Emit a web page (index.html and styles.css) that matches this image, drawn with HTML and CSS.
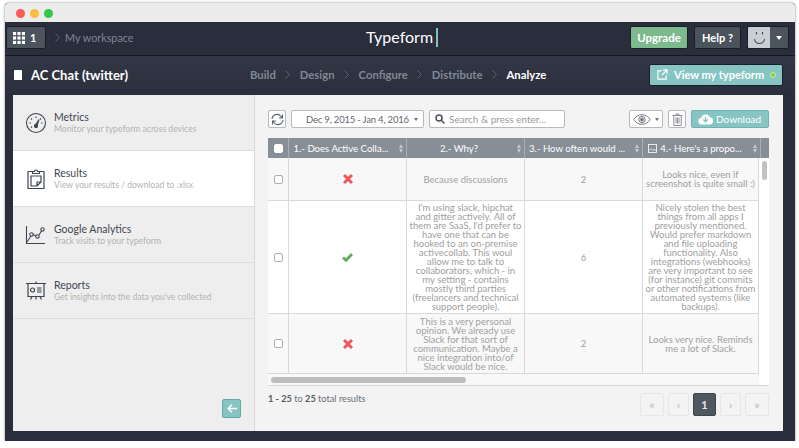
FILE: index.html
```html
<!DOCTYPE html>
<html lang="en">
<head>
    <meta charset="UTF-8">
    <title>Typeform - Results</title>
    <link rel="stylesheet" href="styles.css">
</head>
<body>
    <div class="window">
        <div class="titlebar">
            <span class="light red"></span>
            <span class="light yellow"></span>
            <span class="light green"></span>
        </div>

        <div class="topbar">
            <div class="top-left">
                <button class="btn-dark apps">
                    <svg width="12" height="12" viewBox="0 0 13 13" fill="#fff"><rect width="3.4" height="3.4"/><rect x="4.8" width="3.4" height="3.4"/><rect x="9.6" width="3.4" height="3.4"/><rect y="4.8" width="3.4" height="3.4"/><rect x="4.8" y="4.8" width="3.4" height="3.4"/><rect x="9.6" y="4.8" width="3.4" height="3.4"/><rect y="9.6" width="3.4" height="3.4"/><rect x="4.8" y="9.6" width="3.4" height="3.4"/><rect x="9.6" y="9.6" width="3.4" height="3.4"/></svg>
                    <span>1</span>
                </button>
                <svg class="crumb" width="5" height="9" viewBox="0 0 5 9" fill="none" stroke="#59626e"><path d="M.5.5l4 4-4 4"/></svg>
                <span class="workspace">My workspace</span>
            </div>
            <div class="logo">Typeform<span class="caret"></span></div>
            <div class="top-right">
                <button class="btn-upgrade">Upgrade</button>
                <button class="btn-dark help">Help ?</button>
                <div class="avatar">
                    <div class="face">
                        <svg width="13" height="14" viewBox="0 0 13 14" fill="none" stroke="#3a414c" stroke-width="1.1"><path d="M3.5 1v2.5M9.5 1v2.5"/><path d="M1.5 8.5c.7 3 2.700 4 5 4s4.300-1 5-4" stroke-linecap="round"/></svg>
                    </div>
                    <div class="face-menu"><i class="tri-white"></i></div>
                </div>
            </div>
        </div>

        <div class="subbar">
            <div class="form-name">
                <svg width="8" height="10" viewBox="0 0 8 10" fill="#fff"><path d="M.5 0h7l.5.5v9l-.5.500h-7L0 9.500v-9z"/></svg>
                <span>AC Chat (twitter)</span>
            </div>
            <nav class="steps">
                <a>Build</a><svg width="5" height="9" viewBox="0 0 5 9" fill="none" stroke="#59626e"><path d="M.5.5l4 4-4 4"/></svg>
                <a>Design</a><svg width="5" height="9" viewBox="0 0 5 9" fill="none" stroke="#59626e"><path d="M.5.5l4 4-4 4"/></svg>
                <a>Configure</a><svg width="5" height="9" viewBox="0 0 5 9" fill="none" stroke="#59626e"><path d="M.5.5l4 4-4 4"/></svg>
                <a>Distribute</a><svg width="5" height="9" viewBox="0 0 5 9" fill="none" stroke="#59626e"><path d="M.5.5l4 4-4 4"/></svg>
                <a class="current">Analyze</a>
            </nav>
            <button class="btn-view">
                <svg width="11" height="11" viewBox="0 0 12 12" fill="none" stroke="#fff" stroke-width="1.300"><path d="M5 2H1v9h9V7"/><path d="M6.500 1H11v4.500M11 1L5.500 6.500"/></svg>
                <span>View my typeform</span>
                <i class="live-dot"></i>
            </button>
        </div>

        <div class="content">
            <aside class="sidebar">
                <div class="side-item">
                    <svg width="22" height="22" viewBox="0 0 22 22" fill="none" stroke="#3f4651" stroke-width="1.100"><circle cx="11" cy="11" r="9.500"/><path d="M11 4.500v1.500M6 6.500l1 1M16 6.500l-1 1M4.500 11H6M17.500 11H16M6 15.500l1-1"/><path d="M14 7.500l-3.500 5.500 1.500.8z" fill="#3f4651"/><circle cx="11" cy="14" r="1.600" fill="#3f4651"/></svg>
                    <div><h3>Metrics</h3><p>Monitor your typeform across devices</p></div>
                </div>
                <div class="side-item active">
                    <svg width="22" height="22" viewBox="0 0 22 22" fill="none" stroke="#3f4651" stroke-width="1.200"><path d="M7.500 3.500H3v17h16v-17h-4.500"/><path d="M7.500 5.500v-2h2a1.500 1.500 0 0 1 3 0h2v2z"/><path d="M6 8h10v6l-4 4H6zM16 14h-4v4"/></svg>
                    <div><h3>Results</h3><p>View your results / download to .xlsx</p></div>
                </div>
                <div class="side-item">
                    <svg width="22" height="22" viewBox="0 0 22 22" fill="none" stroke="#3f4651" stroke-width="1.100"><path d="M1.500 2v17.500H20"/><path d="M2 18l4-6M8 10.500l3 1.500M14 11l2.500-4"/><circle cx="6.500" cy="10.500" r="1.700"/><circle cx="12.500" cy="12.500" r="1.700"/><circle cx="17.500" cy="5.500" r="1.700"/></svg>
                    <div><h3>Google Analytics</h3><p>Track visits to your typeform</p></div>
                </div>
                <div class="side-item">
                    <svg width="22" height="22" viewBox="0 0 22 22" fill="none" stroke="#3f4651" stroke-width="1.200"><path d="M1 3.500h20M11 1.500v2M3 3.500v13h16v-13M7 16.500l-1.500 3M15 16.500l1.500 3M11 16.500v3"/><circle cx="7.500" cy="10" r="2"/><path d="M12 8h4.500M12 10h4.500M12 12h4.500"/></svg>
                    <div><h3>Reports</h3><p>Get insights into the data you've collected</p></div>
                </div>
                <div class="side-foot">
                    <button class="btn-back">
                        <svg width="10" height="9" viewBox="0 0 10 9" fill="none" stroke="#fff" stroke-width="1.500"><path d="M4.800.8L1.200 4.500l3.600 3.700M1.500 4.500H10"/></svg>
                    </button>
                </div>
            </aside>

            <main class="results">
                <div class="toolbar">
                    <button class="tool square">
                        <svg width="13" height="13" viewBox="0 0 13 13" fill="none" stroke="#59626e" stroke-width="1.100"><path d="M1 6a5 5 0 0 1 9-2.500L11.500 5M11.500 1.500V5H8"/><path d="M12 7a5 5 0 0 1-9 2.500L1.500 8M1.500 11.500V8H5"/></svg>
                    </button>
                    <button class="tool date">Dec 9, 2015 - Jan 4, 2016<i class="tri-grey"></i></button>
                    <div class="tool search">
                        <svg width="10" height="10" viewBox="0 0 10 10" fill="none" stroke="#4a525c" stroke-width="1.500"><circle cx="4" cy="4" r="3"/><path d="M6.300 6.300L9.500 9.500"/></svg>
                        <span>Search &amp; press enter...</span>
                    </div>
                    <button class="tool eye">
                        <svg width="18" height="11" viewBox="0 0 18 11" fill="none" stroke="#737a83" stroke-width="1"><path d="M.8 5.500C3 2 6 .7 9 .7s6 1.300 8.200 4.800C15 9 12 10.300 9 10.300S3 9 .8 5.500z"/><circle cx="9" cy="5.500" r="3.200"/><circle cx="9" cy="5.500" r="1.500" fill="#737a83"/></svg>
                        <i class="tri-grey"></i>
                    </button>
                    <button class="tool square">
                        <svg width="11" height="13" viewBox="0 0 11 13" fill="none" stroke="#8a9097" stroke-width="1"><path d="M.5 2.500h10M4 2.500V1h3v1.500M1.800 2.500v10h7.400v-10M4 4.500v6M5.500 4.500v6M7 4.500v6"/></svg>
                    </button>
                    <button class="btn-download">
                        <svg width="15" height="12" viewBox="0 0 16 13"><path d="M4 12.500a3.500 3.500 0 0 1-.6-7 4.800 4.800 0 0 1 9.200-.8 3.900 3.900 0 0 1-.4 7.800z" fill="#fff"/><path d="M8 4v5M5.500 7L8 9.500 10.500 7" fill="none" stroke="#86c5c3" stroke-width="1.500"/></svg>
                        <span>Download</span>
                    </button>
                </div>

                <div class="grid">
                    <div class="grid-head">
                        <div class="cell-head check"><i class="box solid"></i></div>
                        <div class="cell-head"><span>1.- Does Active Colla...</span><i class="sort"></i></div>
                        <div class="cell-head"><span>2.- Why?</span><i class="sort"></i></div>
                        <div class="cell-head"><span>3.- How often would ...</span><i class="sort"></i></div>
                        <div class="cell-head"><span><svg class="img-icon" width="9" height="9" viewBox="0 0 9 9" fill="none" stroke="#fff" stroke-width=".8"><rect x=".5" y=".5" width="8" height="8"/><path d="M.5 7l2.500-2.500L5 6.500l1.500-1.500L8.500 7"/></svg>4.- Here's a propo...</span><i class="sort"></i></div>
                        <div class="cell-head"></div>
                    </div>
                    <div class="grid-main">
                        <div class="grid-rows">
                            <div class="row tint" style="height: 43px">
                                <div class="cell"><i class="box"></i></div>
                                <div class="cell"><svg width="10" height="10" viewBox="0 0 10 10" stroke="#f0575c" stroke-width="3"><path d="M1 1l8 8M9 1l-8 8"/></svg></div>
                                <div class="cell">Because discussions</div>
                                <div class="cell">2</div>
                                <div class="cell">Looks nice, even if screenshot is quite small :)</div>
                            </div>
                            <div class="row" style="height: 113px">
                                <div class="cell"><i class="box"></i></div>
                                <div class="cell"><svg width="11" height="9" viewBox="0 0 11 9" fill="none" stroke="#62a862" stroke-width="2.800"><path d="M1 4.500l3 2.800L10 1"/></svg></div>
                                <div class="cell"><p>I'm using slack, hipchat<br>and gitter actively. All of<br>them are SaaS, I'd prefer to<br>have one that can be<br>hooked to an on-premise<br>activecollab. This woul<br>allow me to talk to<br>collaborators, which - in<br>my setting - contains<br>mostly third parties<br>(freelancers and technical<br>support people).</p></div>
                                <div class="cell">6</div>
                                <div class="cell">Nicely stolen the best things from all apps I previously mentioned. Would prefer markdown and file uploading functionality. Also integrations (webhooks) are very important to see (for instance) git commits or other notifications from automated systems (like backups).</div>
                            </div>
                            <div class="row tint" style="height: 60px">
                                <div class="cell"><i class="box"></i></div>
                                <div class="cell"><svg width="10" height="10" viewBox="0 0 10 10" stroke="#f0575c" stroke-width="3"><path d="M1 1l8 8M9 1l-8 8"/></svg></div>
                                <div class="cell"><p>This is a very personal<br>opinion. We already use<br>Slack for that sort of<br>communication. Maybe a<br>nice integration into/of<br>Slack would be nice.</p></div>
                                <div class="cell">2</div>
                                <div class="cell">Looks very nice. Reminds me a lot of Slack.</div>
                            </div>
                        </div>
                        <div class="v-track"><div class="v-thumb"></div></div>
                    </div>
                    <div class="h-track"><div class="h-thumb"></div></div>
                </div>

                <div class="grid-foot">
                    <div class="total"><b>1 - 25</b> to <b>25</b> total results</div>
                    <div class="pager">
                        <button class="page wide">«</button>
                        <button class="page">‹</button>
                        <button class="page on">1</button>
                        <button class="page">›</button>
                        <button class="page wide">»</button>
                    </div>
                </div>
            </main>
        </div>
    </div>
</body>
</html>
```
FILE: styles.css
```css
* {
    box-sizing: border-box;
}
body {
    margin: 0;
    background: #fff;
    font-family: 'Lato', 'Open Sans', sans-serif;
    overflow: hidden;
}
button {
    font-family: inherit;
    padding: 0;
    cursor: pointer;
    white-space: nowrap;
}
i {
    display: block;
}
.window {
    width: 790px;
    height: 438px;
    margin: 3px 0 0 5px;
    border-radius: 4px 4px 0 0;
    box-shadow: 0 0 3px rgba(0, 0, 0, 0.45);
    background: #2a2d3c;
    display: flex;
    flex-direction: column;
    overflow: hidden;
}
.titlebar {
    height: 19px;
    background: #ececec;
    padding-left: 11px;
    padding-top: 6px;
    display: flex;
    gap: 5px;
}
.light {
    width: 9px;
    height: 9px;
    border-radius: 50%;
}
.red { background: #fc5b57; }
.yellow { background: #fdbc40; }
.green { background: #34c84a; }

.topbar {
    height: 34px;
    padding: 4px 6px 0 1px;
    display: flex;
    justify-content: space-between;
    position: relative;
    border-bottom: 1px solid #15171f;
}
.top-left, .top-right {
    display: flex;
    align-items: flex-start;
}
.btn-dark {
    height: 23px;
    background: #4b535d;
    border: 1px solid #1b1d27;
    border-radius: 2px;
    color: #fff;
    font-weight: 700;
    font-size: 11px;
}
.apps {
    width: 40px;
    display: flex;
    align-items: center;
    gap: 5px;
    padding-left: 6px;
}
.crumb {
    margin: 7px 0 0 9px;
}
.workspace {
    margin: 5px 0 0 5px;
    font-size: 10.8px;
    color: #7b8794;
}
.logo {
    position: absolute;
    left: 361px;
    top: 3px;
    font-size: 16px;
    color: #fff;
    display: flex;
    align-items: center;
    gap: 3px;
    line-height: 24px;
}
.caret {
    width: 2px;
    height: 19px;
    background: #7cc4c0;
}
.top-right {
    gap: 6px;
}
.btn-upgrade {
    width: 58px;
    height: 23px;
    background: #7cb98d;
    border: 1px solid #1b1d27;
    border-radius: 2px;
    color: #fff;
    font-weight: 700;
    font-size: 11.5px;
}
.help {
    width: 47px;
}
.avatar {
    width: 42px;
    height: 23px;
    display: flex;
    border: 1px solid #1b1d27;
    border-radius: 2px;
    overflow: hidden;
}
.face {
    width: 22px;
    background: #c9ced3;
    display: flex;
    align-items: center;
    justify-content: center;
}
.face-menu {
    flex: 1;
    background: #4b535d;
    display: flex;
    align-items: center;
    justify-content: center;
}
.tri-white {
    border-left: 3.5px solid transparent;
    border-right: 3.5px solid transparent;
    border-top: 4px solid #fff;
}
.tri-grey {
    border-left: 2.5px solid transparent;
    border-right: 2.5px solid transparent;
    border-top: 3.5px solid #6b727b;
}

.subbar {
    height: 39px;
    padding: 0 12px 2px 9px;
    background: linear-gradient(#333745, #2b2e3d);
    display: flex;
    align-items: center;
    position: relative;
}
.form-name {
    display: flex;
    align-items: center;
    gap: 9px;
    color: #fff;
    font-size: 13px;
    font-weight: 700;
}
.steps {
    position: absolute;
    left: 245px;
    top: 12px;
    display: flex;
    align-items: center;
    font-size: 11.3px;
    font-weight: 700;
    color: #7f8894;
}
.steps svg {
    margin: 0 9.5px;
}
.current {
    color: #fff;
}
.btn-view {
    margin-left: auto;
    width: 134px;
    height: 22px;
    background: #86c5c3;
    border: 1px solid #1b1d27;
    border-radius: 2px;
    color: #fff;
    font-size: 11px;
    font-weight: 700;
    display: flex;
    align-items: center;
    padding-left: 7px;
}
.btn-view span {
    margin-left: 6px;
}
.live-dot {
    width: 6px;
    height: 6px;
    margin-left: 6px;
    border-radius: 50%;
    background: #7fd13b;
    border: 1px solid #cfeaa8;
}

.content {
    flex: 1;
    display: flex;
    margin: 0 12px 10px 8px;
    min-height: 0;
}
.sidebar {
    width: 242px;
    background: #eeeeee;
    border-right: 1px solid #d8d8d8;
    display: flex;
    flex-direction: column;
}
.side-item {
    height: 56px;
    border-bottom: 1px solid #dedede;
    display: flex;
    align-items: center;
    gap: 7px;
    padding: 1px 0 0 12px;
}
.side-item svg {
    margin-top: -1px;
}
.side-item.active {
    background: #fff;
}
.side-item h3 {
    margin: 0 0 1px;
    font-size: 10.5px;
    line-height: 12px;
    font-weight: 400;
    color: #3f4651;
}
.side-item p {
    margin: 0;
    font-size: 8.6px;
    line-height: 11px;
    color: #b3b3b3;
}
.side-foot {
    flex: 1;
    display: flex;
    align-items: flex-end;
    justify-content: flex-end;
    padding: 0 13px 13px 0;
}
.btn-back {
    width: 19px;
    height: 19px;
    background: #86c5c3;
    border: 1px solid #62a9a7;
    border-radius: 2px;
    display: flex;
    align-items: center;
    justify-content: center;
}

.results {
    flex: 1;
    background: #f3f3f3;
    padding: 15px 14px 0 13px;
    min-width: 0;
}
.toolbar {
    height: 18px;
    display: flex;
    gap: 5px;
}
.tool {
    height: 18px;
    background: #fff;
    border: 1px solid #b9b9b9;
    border-radius: 2px;
    display: flex;
    align-items: center;
    color: #5f666f;
    font-size: 10px;
}
.square {
    width: 18px;
    justify-content: center;
}
.date {
    width: 133px;
    padding-left: 14px;
    gap: 5px;
    font-size: 9.5px;
    letter-spacing: -0.2px;
}
.search {
    width: 136px;
    padding-left: 5px;
    gap: 4px;
    color: #9a9a9a;
}
.eye {
    width: 34px;
    margin-left: auto;
    justify-content: center;
    gap: 4px;
}
.btn-download {
    width: 78px;
    height: 18px;
    background: #86c5c3;
    border: 1px solid #6db3b1;
    border-radius: 2px;
    color: #fff;
    font-size: 10px;
    display: flex;
    align-items: center;
    gap: 3px;
    padding-left: 6px;
}

.grid {
    margin-top: 10px;
    width: 501px;
    background: #fff;
    border-bottom: 1px solid #d4d4d4;
}
.grid-head {
    height: 20px;
    background: #878e96;
    display: grid;
    grid-template-columns: 21px 118px 118px 118px 118px 8px;
}
.cell-head {
    display: flex;
    align-items: center;
    justify-content: space-between;
    padding: 0 3px 0 4px;
    border-right: 1px solid #a9aeb4;
    color: #fff;
    font-size: 9.6px;
    white-space: nowrap;
    overflow: hidden;
}
.cell-head:last-child {
    border-right: 0;
}
.cell-head span {
    flex: 1 1 0;
    min-width: 0;
    text-align: center;
    padding-right: 10px;
}
.cell-head.check {
    justify-content: center;
}
.img-icon {
    margin-right: 3px;
    vertical-align: -1px;
}
.sort {
    flex: none;
    display: flex;
    flex-direction: column;
    gap: 1px;
}
.sort::before, .sort::after {
    content: "";
    border-left: 2.5px solid transparent;
    border-right: 2.5px solid transparent;
}
.sort::before {
    border-bottom: 4.5px solid #c4c8cc;
}
.sort::after {
    border-top: 4.5px solid #c4c8cc;
}
.box {
    width: 9px;
    height: 9px;
    background: #fff;
    border: 1px solid #aeaeae;
    border-radius: 2px;
}
.box.solid {
    border-color: #fff;
}
.grid-main {
    display: flex;
    background: #fff;
}
.grid-rows {
    width: 491px;
}
.row {
    display: grid;
    grid-template-columns: 21px 118px 118px 118px 116px;
    border-bottom: 1px solid #d9d9d9;
}
.row.tint {
    background: #f8f8f8;
}
.cell {
    display: flex;
    align-items: center;
    justify-content: center;
    text-align: center;
    padding: 0 1px;
    border-right: 1px solid #d9d9d9;
    font-size: 9.5px;
    line-height: 9px;
    color: #a0a0a0;
}
.cell p {
    margin: 0;
}
.v-track {
    flex: 1;
    padding: 3px 2px 0 3px;
}
.v-thumb {
    width: 5px;
    height: 19px;
    border-radius: 3px;
    background: #c2c2c2;
}
.h-track {
    height: 11px;
    padding: 3px 0 0 3px;
    background: linear-gradient(to right, #f8f8f8 491px, #fff 491px);
}
.h-thumb {
    width: 195px;
    height: 6px;
    border-radius: 3px;
    background: #bdbdbd;
}

.grid-foot {
    display: flex;
    justify-content: space-between;
    margin-top: 7px;
}
.total {
    font-size: 9.2px;
    color: #6a6f76;
}
.total b {
    color: #555b63;
}
.pager {
    display: flex;
    gap: 4px;
}
.page {
    width: 21px;
    height: 23px;
    background: #f3f3f3;
    border: 1px solid #e6e6e6;
    border-radius: 2px;
    color: #c4c4c4;
    font-size: 11px;
    font-weight: 700;
}
.page.wide {
    width: 24px;
}
.page.on {
    width: 23px;
    background: #4f5761;
    border-color: #3d444d;
    color: #e8e8e8;
}
```
